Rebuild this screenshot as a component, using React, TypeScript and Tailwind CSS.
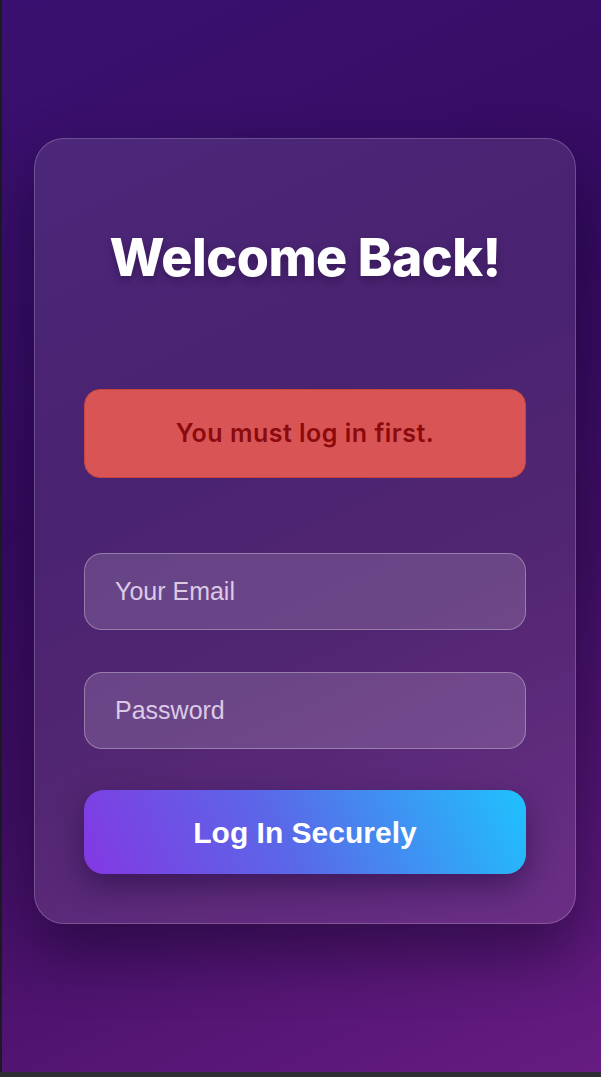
export default function App() {
  return (
    <div className="flex h-[1077px] w-full flex-col bg-[#2f2d33]">
      <div className="flex-1 border-l-2 border-[#1d1b22] bg-[linear-gradient(155deg,#3a1170_0%,#350b60_40%,#3f0e63_60%,#661c81_100%)] pt-[138px] pl-[32px]">
        <div className="w-[542px] rounded-[30px] border border-white/20 bg-white/10 px-[49px] pt-[88px] pb-[49px] shadow-[0_30px_60px_rgba(10,0,30,0.45)]">
          <h1 className="text-center font-['Inter',sans-serif] text-[52px] leading-[62px] font-extrabold tracking-[-0.01em] text-white [text-shadow:0_4px_8px_rgba(20,0,40,0.35)]">
            Welcome Back!
          </h1>

          <div className="mt-[100px] flex h-[89px] items-center justify-center rounded-[16px] border border-[#c4443f] bg-[#d95555]">
            <span className="font-['Inter',sans-serif] text-[25px] font-semibold tracking-[0.02em] text-[#8a0a0e]">
              You must log in first.
            </span>
          </div>

          <div className="mt-[75px] flex flex-col gap-[42px]">
            <input
              type="email"
              placeholder="Your Email"
              className="h-[77px] w-full rounded-[18px] border border-white/30 bg-white/15 px-[30px] font-['Liberation_Sans',Arial,sans-serif] text-[25px] text-white outline-none placeholder:text-[#dcc9e6]"
            />
            <input
              type="password"
              placeholder="Password"
              className="h-[77px] w-full rounded-[18px] border border-white/30 bg-white/15 px-[30px] font-['Liberation_Sans',Arial,sans-serif] text-[25px] text-white outline-none placeholder:text-[#dcc9e6]"
            />
          </div>

          <button className="mt-[41px] flex h-[84px] w-full items-center justify-center rounded-[20px] bg-[linear-gradient(65deg,#8338e2_0%,#5a68e8_45%,#1fc2fd_100%)] font-['Liberation_Sans',Arial,sans-serif] text-[30px] font-bold text-white shadow-[0_12px_30px_rgba(20,0,50,0.45)]">
            Log In Securely
          </button>
        </div>
      </div>
      <div className="h-[5px]" />
    </div>
  );
}
